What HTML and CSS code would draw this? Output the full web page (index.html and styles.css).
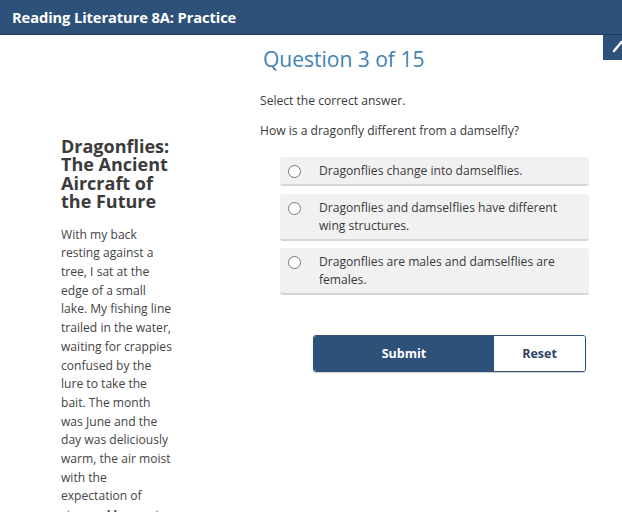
FILE: index.html
```html
<!DOCTYPE html>
<html>
<head>
<meta charset="utf-8">
<link rel="stylesheet" href="styles.css">
</head>
<body>
<header class="topbar">
  <h1 class="topbar-title">Reading Literature 8A: Practice</h1>
</header>
<button class="side-tab" aria-label="Collapse">
  <svg width="24" height="24" viewBox="0 0 24 24"><path d="M4 16 L11.5 7 L19 16" fill="none" stroke="#fff" stroke-width="2.4" stroke-linecap="round" stroke-linejoin="round"/></svg>
</button>
<main class="layout">
  <section class="passage">
    <h2 class="passage-title">Dragonflies: The Ancient Aircraft of the Future</h2>
    <p class="passage-text">With my back resting against a tree, I sat at the edge of a small lake. My fishing line trailed in the water, waiting for crappies confused by the lure to take the bait. The month was June and the day was deliciously warm, the air moist with the expectation of storms. My sweet</p>
  </section>
  <section class="question">
    <h2 class="q-heading">Question 3 of 15</h2>
    <p class="q-instr">Select the correct answer.</p>
    <p class="q-prompt">How is a dragonfly different from a damselfly?</p>
    <ul class="options">
      <li class="option"><span class="radio"></span><span class="opt-text">Dragonflies change into damselflies.</span></li>
      <li class="option"><span class="radio"></span><span class="opt-text">Dragonflies and damselflies have different wing structures.</span></li>
      <li class="option"><span class="radio"></span><span class="opt-text">Dragonflies are males and damselflies are females.</span></li>
    </ul>
    <div class="actions">
      <button class="btn btn-submit">Submit</button>
      <button class="btn btn-reset">Reset</button>
    </div>
  </section>
</main>
</body>
</html>
```
FILE: styles.css
```css
* { box-sizing: border-box; }
html, body { margin: 0; padding: 0; }
body {
  font-family: "Open Sans", "Noto Sans", sans-serif;
  background: #fff;
  color: #3a3a3a;
  width: 622px;
  height: 512px;
  overflow: hidden;
  position: relative;
}
.topbar {
  height: 35px;
  background: #2d5179;
  border-bottom: 1px solid #1f3b5a;
  display: flex;
  align-items: center;
  padding-left: 12px;
}
.topbar-title {
  margin: 0;
  color: #fff;
  font-size: 14.7px;
  font-weight: 700;
  letter-spacing: -0.1px;
}
.side-tab {
  position: absolute;
  top: 35px;
  left: 603px;
  width: 30px;
  height: 25px;
  background: #2d5179;
  border: none;
  padding: 0;
  display: flex;
  align-items: center;
  justify-content: flex-start;
  overflow: hidden;
}
.side-tab svg { flex: none; margin-left: 7px; margin-top: -2px; }
.layout {
  display: flex;
  align-items: flex-start;
}
.passage {
  width: 260px;
  padding: 102px 0 0 61px;
}
.passage-title {
  margin: 0;
  width: 120px;
  font-size: 18px;
  line-height: 18.4px;
  font-weight: 700;
  color: #3b3b3b;
}
.passage-text {
  margin: 15px 0 0 0;
  width: 112px;
  font-size: 12.1px;
  line-height: 18.7px;
  color: #444;
}
.question {
  width: 330px;
}
.q-heading {
  margin: 9px 0 0 3px;
  font-size: 21px;
  line-height: 30px;
  font-weight: 400;
  color: #3f82b5;
}
.q-instr {
  margin: 18px 0 0 0;
  font-size: 12.1px;
  line-height: 18px;
}
.q-prompt {
  margin: 12px 0 0 0;
  font-size: 12.1px;
  line-height: 18px;
}
.options {
  list-style: none;
  margin: 17px 0 0 20px;
  padding: 0;
  width: 309px;
  display: flex;
  flex-direction: column;
  gap: 8px;
}
.option {
  display: flex;
  align-items: flex-start;
  background: #f1f1f1;
  border-radius: 3px;
  border-bottom: 2px solid #d6d6d6;
  padding: 5px 10px 4px 8px;
}
.option:last-child { margin-top: -1px; }
.radio {
  flex: none;
  width: 13px;
  height: 13px;
  border: 1.5px solid #777;
  border-radius: 50%;
  background: #fff;
  margin-top: 2.5px;
}
.opt-text {
  margin-left: 18px;
  font-size: 12.1px;
  line-height: 18px;
  color: #3a3a3a;
}
.actions {
  display: flex;
  margin: 40px 0 0 53px;
  width: 273px;
  height: 37px;
  border: 1.5px solid #2d5179;
  border-radius: 3px;
  overflow: hidden;
  box-shadow: 0 1px 1px rgba(0,0,0,0.2);
}
.btn {
  border: none;
  font-family: inherit;
  font-size: 12.5px;
  font-weight: 700;
  padding: 0;
}
.btn-submit {
  width: 180px;
  background: #2d5179;
  color: #fff;
}
.btn-reset {
  flex: 1;
  background: #fff;
  color: #2d4565;
}
```
